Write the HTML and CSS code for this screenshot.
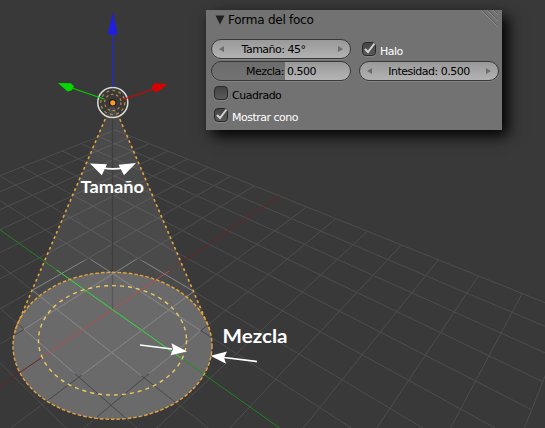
FILE: index.html
```html
<!DOCTYPE html>
<html lang="es">
<head>
<meta charset="utf-8">
<title>Forma del foco</title>
<link rel="stylesheet" href="styles.css">
</head>
<body>
<main class="viewport">
  <svg class="scene" width="545" height="428" viewBox="0 0 545 428">
    <defs>
      <clipPath id="disc"><ellipse cx="112.5" cy="345.8" rx="99.5" ry="73.5"/></clipPath>
      <clipPath id="lit"><ellipse cx="112.3" cy="318" rx="90" ry="61"/></clipPath>
      <clipPath id="cone"><path d="M112.5 102 15.5 329 112 420 209.5 329Z"/></clipPath>
      <g id="grid"></g>
      <path id="axis-x" d=""/>
      <path id="axis-y" d=""/>
    </defs>
    <g class="floor">
      <use href="#grid" class="grid"/>
      <use href="#axis-x" class="red"/>
      <use href="#axis-y" class="green"/>
    </g>
    <path class="cone-fill" d="M112.5 102 15.5 329 A99.5 73.5 0 0 1 209.5 329Z"/>
    <ellipse class="disc-fill" cx="112.5" cy="345.8" rx="99.5" ry="73.5"/>
    <path class="drop" d="M112.5 118V309"/>
    <g clip-path="url(#disc)">
      <use href="#grid" class="grid-dark"/>
      <use href="#axis-x" class="red-dark"/>
      <use href="#axis-y" class="green-mid"/>
      <g clip-path="url(#lit)">
        <rect class="disc-patch" x="0" y="250" width="230" height="140"/>
        <use href="#grid" class="grid-lit"/>
        <use href="#axis-x" class="red-lit"/>
        <use href="#axis-y" class="green-lit"/>
        <path class="drop-lit" d="M112.5 272V309"/>
      </g>
    </g>
    <g clip-path="url(#cone)"><g clip-path="url(#lit)">
      <use href="#grid" class="grid-lit"/>
      <use href="#axis-x" class="red-lit"/>
      <use href="#axis-y" class="green-lit"/>
    </g></g>
    <path class="outline" d="M105.2 119 15.5 329M119.8 119 209.5 329"/>
    <ellipse class="outline outline-disc" cx="112.5" cy="345.8" rx="99.5" ry="73.5"/>
    <ellipse class="blend" cx="112.5" cy="340.3" rx="74" ry="54.7"/>

    <circle class="lamp" cx="112.8" cy="102.5" r="15"/>
    <circle class="lamp-ring" cx="112.8" cy="102.5" r="12"/>
    <circle class="lamp-ring small" cx="112.8" cy="102.5" r="8.2"/>
    <circle class="lamp-dot" cx="112.8" cy="102.8" r="3.2"/>
    <path class="blue-line" d="M112.8 87V33"/><path class="blue-head" d="M112.8 12 117.6 33.5 115.5 35H110L107.8 33.5Z"/>
    <path class="green-line" d="M104 99 72 88"/><path class="green-head" d="M58 83 71 83.2 74 86.5 71.5 90.5 67.5 91.5Z"/>
    <path class="red-line" d="M123 99.5 154 89"/><path class="red-head" d="M167.5 84 154.5 83.2 151.8 87 153.5 91 157.5 92Z"/>

    <g class="note">
      <path class="stroke" d="M102 167.6Q112.5 170.4 125 167.4"/>
      <path d="M90 163.4 107 164.3 101.8 175.2ZM136 163 118.5 164.8 124 175.2Z"/>
      <path class="stroke" d="M140 345 172 349"/>
      <path d="M187 351.6 171.5 343.2 173 349.2 170.5 355.3Z"/>
      <path class="stroke" d="M257 361.6 224 357.5"/>
      <path d="M210.5 355.8 227 351.4 224 357.5 226 363.8Z"/>
      <text x="80.5" y="192.6" font-size="16.3" textLength="63.5" lengthAdjust="spacingAndGlyphs">Tamaño</text>
      <text x="222.5" y="343.3" font-size="18.5" textLength="65" lengthAdjust="spacingAndGlyphs">Mezcla</text>
    </g>
  </svg>

  <section class="panel">
    <header class="title">
      <svg width="10" height="10"><path d="M0.5 .5H9.5L5 9.5Z"/></svg>
      <span>Forma del foco</span>
      <svg class="grip" width="18" height="18"><path class="lo" d="M1 0 17 16M7 0 17 10M13 0 17 4"/><path class="hi" d="M0 0 17 17M6 0 17 11M12 0 17 5"/></svg>
    </header>
    <div class="controls">
      <div class="field size"><i class="left"></i><span>Tamaño: 45°</span><i class="right"></i></div>
      <label class="check on"><b><svg width="16" height="16"><path d="M4 8 7 11 13.5 2.5"/></svg></b>Halo</label>
      <div class="field slider"><span>Mezcla: 0.500</span></div>
      <div class="field"><i class="left"></i><span>Intesidad: 0.500</span><i class="right"></i></div>
      <label class="check wide"><b></b>Cuadrado</label>
      <label class="check on wide"><b><svg width="16" height="16"><path d="M4 8 7 11 13.5 2.5"/></svg></b>Mostrar cono</label>
    </div>
  </section>
</main>
<script src="scene.js"></script>
</body>
</html>
```
FILE: styles.css
```css
body { margin: 0; background: #393939; overflow: hidden; }
.viewport { position: relative; width: 545px; height: 428px; overflow: hidden; background: #393939; }
.scene { display: block; }
.scene path, .scene use { fill: none; stroke-width: 1; }
.scene .grid { stroke: #4d4d4d; }
.scene .red { stroke: #6a2325; }
.scene .green { stroke: #1f821f; }
.scene .cone-fill { fill: #fff; fill-opacity: .09; }
.disc-fill, .disc-patch { fill: #6a6a6a; }
.scene .drop { stroke: #3e3e3e; stroke-width: 1.3; }
.scene .drop-lit { stroke: #565656; stroke-width: 1.3; }
.scene .grid-dark { stroke: #484848; }
.scene .red-dark { stroke: #6b2527; }
.scene .green-mid { stroke: #219022; }
.scene .grid-lit { stroke: #818181; }
.scene .red-lit { stroke: #a65457; }
.scene .green-lit { stroke: #44c246; }
.scene .outline { fill: none; stroke: #e2a340; stroke-width: 1.6; stroke-dasharray: 2.8 3; }
.scene .outline-disc { stroke-width: 1.4; stroke-dasharray: 3.6 2; }
.blend { fill: none; stroke: #ecca62; stroke-width: 1.4; stroke-dasharray: 4 4; }
.lamp { fill: none; stroke: #d8d8d8; stroke-width: 1.5; }
.lamp-ring { fill: none; stroke: #b98a45; stroke-width: 1.2; stroke-dasharray: 3 3.2; }
.lamp-ring.small { stroke-dasharray: 2.6 2.6; }
.lamp-dot { fill: #f79a32; stroke: #241a10; stroke-width: 1.2; }
.scene .blue-line { stroke: #2a2ac8; stroke-width: 1.4; }
.scene .blue-head { fill: #2020dc; }
.scene .green-line { stroke: #00d000; stroke-width: 1.3; }
.scene .green-head { fill: #00da00; }
.scene .red-line { stroke: #d40000; stroke-width: 1.3; }
.scene .red-head { fill: #da0000; }
.scene .note path { fill: #fff; }
.scene .note .stroke { fill: none; stroke: #fff; stroke-width: 1.7; }
.note text { fill: #fff; font-family: Lato, "Liberation Sans", sans-serif; font-weight: 700; }

.panel {
  position: absolute; left: 206px; top: 10px; width: 296px; height: 120px; box-sizing: border-box;
  padding: 0 3px 0 5px; background: #727272; color: #000;
  box-shadow: 6px 6px 14px #000;
  font: 11px/20px "DejaVu Sans", sans-serif;
}
.title { display: flex; align-items: center; height: 20px; margin-bottom: 9px; padding-left: 4px; font-size: 12px; letter-spacing: -.25px; }
.title svg { fill: #202020; margin-right: 3px; }
.title .grip { margin: 0 0 0 auto; align-self: flex-start; fill: none; }
.grip .lo { stroke: #5c5c5c; }
.grip .hi { stroke: #8c8c8c; }
.controls { display: grid; grid-template-columns: 140px 140px; column-gap: 8px; grid-auto-rows: 20px; row-gap: 2px; }
.field {
  display: flex; align-items: center; justify-content: space-between; box-sizing: border-box;
  height: 20px; padding: 2px 7px 0; border: 1px solid #383838; border-radius: 10px;
  background: linear-gradient(#999, #b2b2b2); box-shadow: 0 1px #858585; letter-spacing: -.5px;
}
.size span { margin-right: 15px; }
.slider { justify-content: center; background: linear-gradient(90deg, rgba(90,90,90,.72) 73px, transparent 73px), linear-gradient(#999, #b5b5b5); }
.field i { width: 0; height: 0; margin-top: -2px; border: 3.5px solid transparent; }
.field .left { border-right: 5px solid #6c6c6c; border-left: 0; }
.field .right { border-left: 5px solid #6c6c6c; border-right: 0; }
.check { display: flex; align-items: center; gap: 4px; padding: 4px 0 0 3px; height: 18px; letter-spacing: -.5px; }
.wide { grid-column: 1 / -1; }
.on { color: #fff; }
.check b { position: relative; width: 12px; height: 12px; margin-top: -6px; border: 1px solid #292929; border-radius: 4px; background: linear-gradient(#444, #5b5b5b); box-shadow: 0 1px #858585; }
.check svg { position: absolute; left: -2px; top: -2px; fill: none; stroke: #d2d2d2; stroke-width: 2; }
```
FILE: scene.js
```js
// Projects a point of the floor plane onto the viewport.
function project(x, y) {
  const w = 1 + 0.0452 * x + 0.0473 * y;
  return [(112.5 + 33.51 * x - 22.5 * y) / w, (309.5 - 5.33 * x - 5.08 * y) / w]
    .map(v => v.toFixed(1)).join(' ');
}
const line = (a, b) => 'M' + project(...a) + 'L' + project(...b);
const N = 8;
let d = '';
for (let i = -N; i <= N; i++) {
  if (i === 0) continue;
  d += line([i, -N], [i, N]) + line([-N, i], [N, i]);
}
const path = document.createElementNS('http://www.w3.org/2000/svg', 'path');
path.setAttribute('d', d);
document.getElementById('grid').appendChild(path);
document.getElementById('axis-x').setAttribute('d', line([-N, 0], [N, 0]));
document.getElementById('axis-y').setAttribute('d', line([0, -N], [0, N]));
```
